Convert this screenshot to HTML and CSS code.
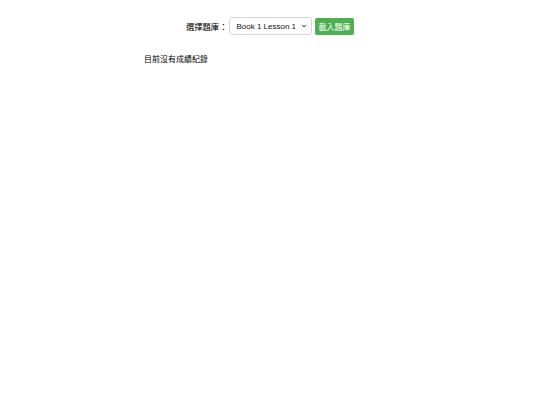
FILE: index.html
```html
<!DOCTYPE html>
<html lang="zh-Hant">
<head>
<meta charset="utf-8">
<link rel="stylesheet" href="styles.css">
</head>
<body>
<div class="page">
  <div class="toolbar">
    <label class="label">選擇題庫：</label>
    <div class="select">
      <span>Book 1 Lesson 1</span>
      <svg class="chev" viewBox="0 0 8 8" width="6" height="6"><path d="M1.5 2.8 L4 5.2 L6.5 2.8" fill="none" stroke="#222" stroke-width="1.3"/></svg>
    </div>
    <button class="btn">載入題庫</button>
  </div>
  <div class="records">目前沒有成績紀錄</div>
</div>
</body>
</html>
```
FILE: styles.css
```css
html, body {
  margin: 0;
  padding: 0;
  background: #fff;
}
body {
  font-family: "Liberation Sans", Arial, "Noto Sans CJK TC", sans-serif;
  font-size: 8px;
  color: #000;
}
.page {
  width: 252px;
  margin: 0 auto;
  padding-top: 17px;
}
.toolbar {
  display: flex;
  align-items: center;
  justify-content: center;
  gap: 3px;
}
.label {
  margin-right: -1px;
  font-size: 8.3px;
}
.select {
  display: flex;
  align-items: center;
  gap: 5px;
  height: 16px;
  padding: 0 4px 0 6px;
  border: 1px solid #d6d6d6;
  border-radius: 3px;
  background: #fff;
  font-size: 8px;
  color: #111;
}
.chev {
  display: block;
}
.btn {
  height: 17px;
  padding: 0 3.5px;
  border: none;
  border-radius: 2px;
  background: #4caf50;
  color: #fff;
  font-family: inherit;
  font-size: 8px;
}
.records {
  margin-top: 18px;
}
```
